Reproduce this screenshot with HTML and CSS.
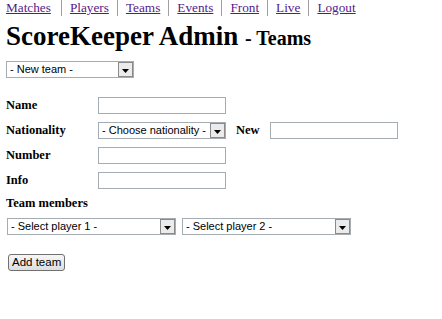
FILE: index.html
```html
<!DOCTYPE html>
<html>
<head>
<meta charset="utf-8">
<title>ScoreKeeper Admin - Teams</title>
<link rel="stylesheet" href="styles.css">
</head>
<body>
<ul class="nav">
  <li><a href="#">Matches</a></li>
  <li><a href="#">Players</a></li>
  <li><a href="#">Teams</a></li>
  <li><a href="#">Events</a></li>
  <li><a href="#">Front</a></li>
  <li><a href="#">Live</a></li>
  <li><a href="#">Logout</a></li>
</ul>
<h1 class="title">ScoreKeeper Admin <span class="sub">- Teams</span></h1>

<div class="team-pick">
  <span class="sel w128"><select class="sel-input"><option>- New team -</option></select><span class="sel-btn"><svg width="7" height="4" viewBox="0 0 7 4"><path d="M0 0h7L3.5 4z" fill="#000"/></svg></span></span>
</div>

<form class="form">
  <label class="lbl">Name</label>
  <div class="ctl"><input class="txt" type="text"></div>

  <label class="lbl">Nationality</label>
  <div class="ctl row">
    <span class="sel w128"><select class="sel-input"><option>- Choose nationality -</option></select><span class="sel-btn"><svg width="7" height="4" viewBox="0 0 7 4"><path d="M0 0h7L3.5 4z" fill="#000"/></svg></span></span>
    <label class="lbl new">New</label>
    <input class="txt" type="text">
  </div>

  <label class="lbl">Number</label>
  <div class="ctl"><input class="txt" type="text"></div>

  <label class="lbl">Info</label>
  <div class="ctl"><input class="txt" type="text"></div>
</form>

<div class="members">
  <div class="lbl">Team members</div>
  <div class="players">
    <span class="sel w169"><select class="sel-input"><option>- Select player 1 -</option></select><span class="sel-btn"><svg width="7" height="4" viewBox="0 0 7 4"><path d="M0 0h7L3.5 4z" fill="#000"/></svg></span></span>
    <span class="sel w169"><select class="sel-input"><option>- Select player 2 -</option></select><span class="sel-btn"><svg width="7" height="4" viewBox="0 0 7 4"><path d="M0 0h7L3.5 4z" fill="#000"/></svg></span></span>
  </div>
</div>

<div class="actions">
  <button class="btn" type="button">Add team</button>
</div>
</body>
</html>
```
FILE: styles.css
```css
html, body {
  margin: 0;
  padding: 0;
  background: #fff;
}
body {
  padding: 0 6px;
  font-family: "Liberation Serif", "Times New Roman", serif;
  color: #000;
}
.nav {
  list-style: none;
  margin: 0;
  padding: 0;
  display: flex;
  height: 16px;
}
.nav li {
  font-size: 13.25px;
  line-height: 16px;
  padding: 0 8px;
  border-left: 1px solid #a0a0a0;
}
.nav li:first-child {
  padding-left: 0;
  padding-right: 10px;
  border-left: none;
}
.nav a {
  color: #551a8b;
}
.title {
  margin: 5px 0 0;
  font-size: 27px;
  line-height: 30px;
  font-weight: bold;
}
.title .sub {
  font-size: 20px;
  line-height: 20px;
}
.team-pick {
  margin-top: 10px;
  height: 17px;
  display: flex;
}
.sel {
  display: inline-flex;
  box-sizing: border-box;
  height: 17px;
  border: 1px solid #a5acb2;
  background: #fff;
}
.w128 { width: 128px; }
.w169 { width: 169px; }
.sel-input {
  -webkit-appearance: none;
  appearance: none;
  border: none;
  outline: none;
  background: transparent;
  flex: 1;
  min-width: 0;
  margin: 0;
  padding: 0 0 0 3px;
  height: 15px;
  font-family: "Liberation Sans", Arial, sans-serif;
  font-size: 11px;
  line-height: 15px;
  color: #000;
}
.sel-btn {
  box-sizing: border-box;
  width: 15px;
  height: 15px;
  border: 1px solid #8a8a8a;
  background: #ebebeb;
  display: flex;
  align-items: center;
  justify-content: center;
  padding-top: 2px;
}
.form {
  margin: 19px 0 0;
  display: grid;
  grid-template-columns: 92px auto;
  row-gap: 8px;
  align-items: center;
}
.lbl {
  font-weight: bold;
  font-size: 12.5px;
  line-height: 17px;
}
.ctl {
  height: 17px;
  display: flex;
  align-items: center;
}
.row .new {
  margin: 0 10px 0 10px;
}
.txt {
  box-sizing: border-box;
  width: 128px;
  height: 17px;
  margin: 0;
  padding: 0 2px;
  border: 1px solid #a5acb2;
  background: #fff;
  font-family: "Liberation Sans", Arial, sans-serif;
  font-size: 11px;
}
.members {
  margin-top: 6px;
}
.players {
  margin-top: 6px;
  padding-left: 1px;
  display: flex;
  gap: 6px;
}
.actions {
  margin-top: 17px;
  padding-left: 2px;
}
.btn {
  box-sizing: border-box;
  height: 17px;
  margin: 0;
  padding: 0 3px;
  border: 1px solid #707070;
  border-radius: 3px;
  background: linear-gradient(#f6f6f6, #dedede);
  font-family: "Liberation Sans", Arial, sans-serif;
  font-size: 11.5px;
  line-height: 15px;
  color: #000;
}
```
